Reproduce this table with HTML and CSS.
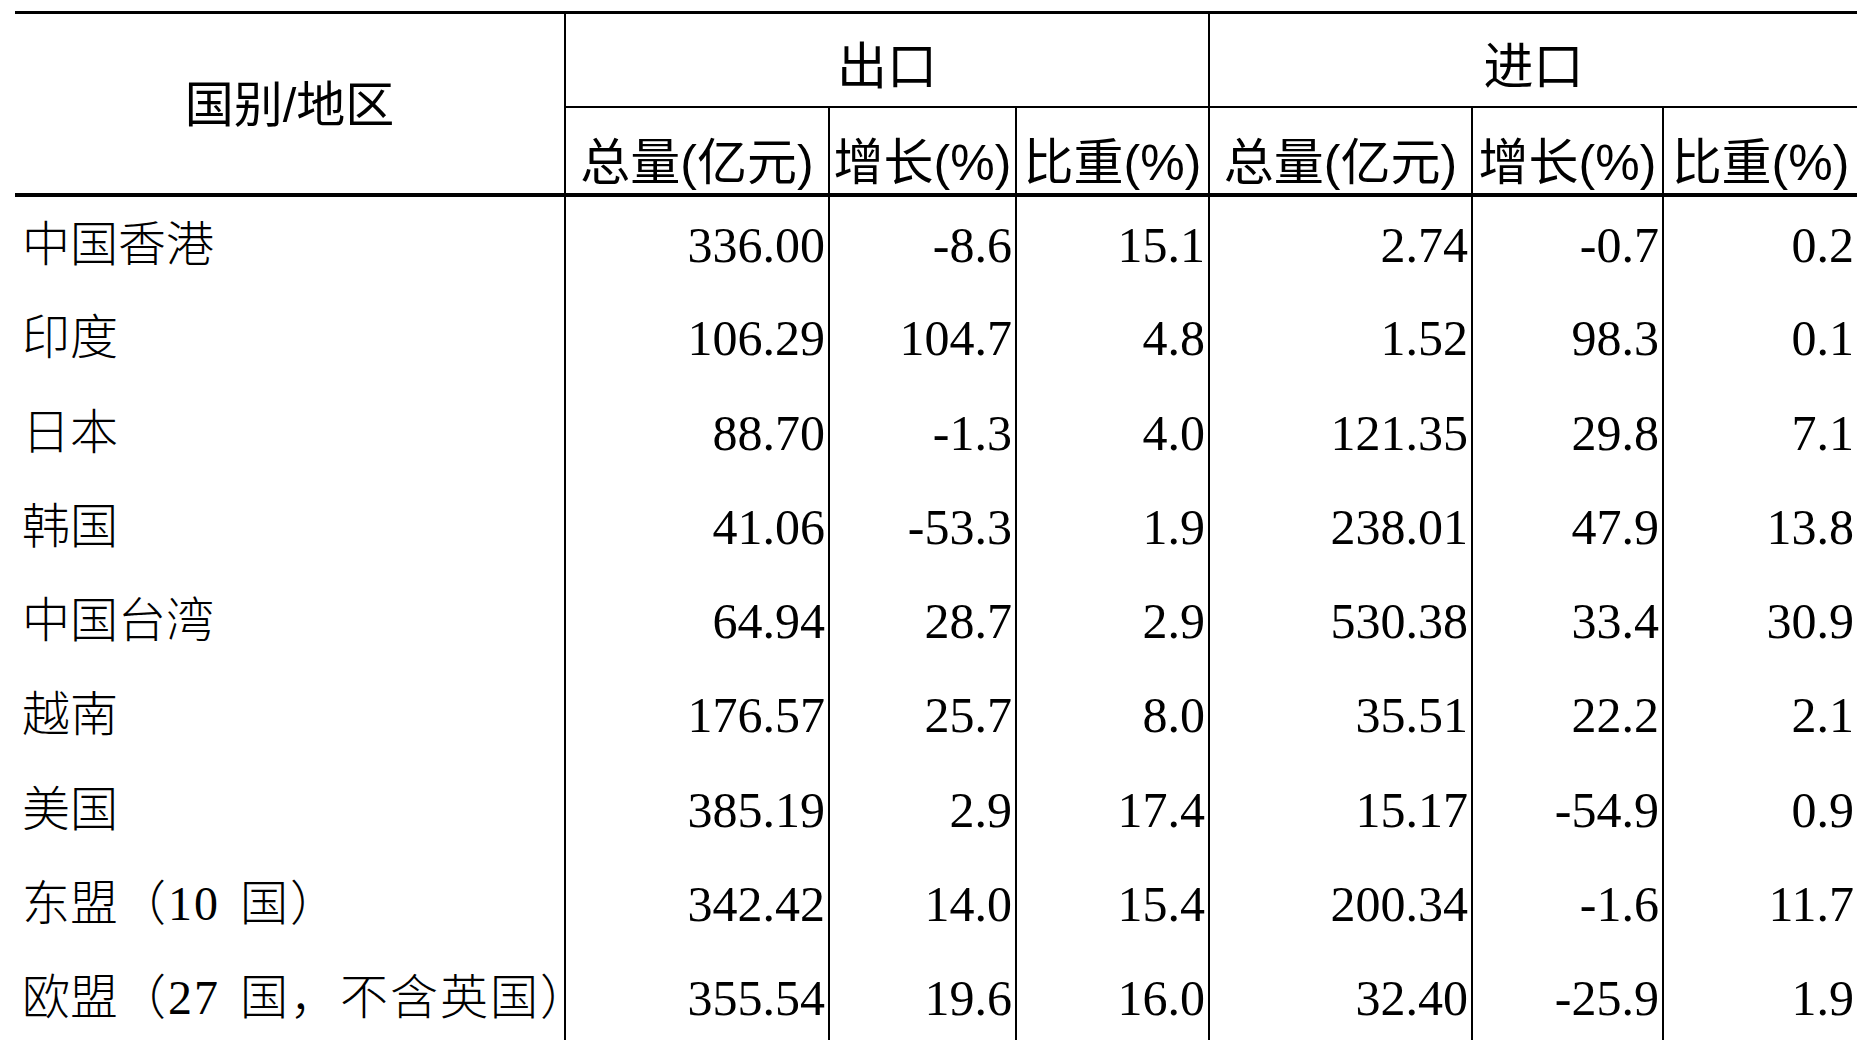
FILE: index.html
```html
<!DOCTYPE html>
<html lang="zh-CN">
<head>
<meta charset="utf-8">
<title>国别/地区 进出口</title>
<link rel="stylesheet" href="styles.css">
</head>
<body>
<div class="wrap">
<table class="trade">
  <colgroup>
    <col class="c-name">
    <col class="c-total">
    <col class="c-grow">
    <col class="c-share">
    <col class="c-total2">
    <col class="c-grow2">
    <col class="c-share2">
  </colgroup>
  <thead>
    <tr class="h1">
      <th rowspan="2" class="region">国别/地区</th>
      <th colspan="3" class="group sep">出口</th>
      <th colspan="3" class="group">进口</th>
    </tr>
    <tr class="h2">
      <th class="sub">总量(亿元)</th>
      <th class="sub">增长(%)</th>
      <th class="sub">比重(%)</th>
      <th class="sub">总量(亿元)</th>
      <th class="sub">增长(%)</th>
      <th class="sub last">比重(%)</th>
    </tr>
  </thead>
  <tbody>
    <tr><td class="name">中国香港</td><td>336.00</td><td>-8.6</td><td>15.1</td><td>2.74</td><td>-0.7</td><td class="last">0.2</td></tr>
    <tr><td class="name">印度</td><td>106.29</td><td>104.7</td><td>4.8</td><td>1.52</td><td>98.3</td><td class="last">0.1</td></tr>
    <tr><td class="name">日本</td><td>88.70</td><td>-1.3</td><td>4.0</td><td>121.35</td><td>29.8</td><td class="last">7.1</td></tr>
    <tr><td class="name">韩国</td><td>41.06</td><td>-53.3</td><td>1.9</td><td>238.01</td><td>47.9</td><td class="last">13.8</td></tr>
    <tr><td class="name">中国台湾</td><td>64.94</td><td>28.7</td><td>2.9</td><td>530.38</td><td>33.4</td><td class="last">30.9</td></tr>
    <tr><td class="name">越南</td><td>176.57</td><td>25.7</td><td>8.0</td><td>35.51</td><td>22.2</td><td class="last">2.1</td></tr>
    <tr><td class="name">美国</td><td>385.19</td><td>2.9</td><td>17.4</td><td>15.17</td><td>-54.9</td><td class="last">0.9</td></tr>
    <tr><td class="name">东盟<span class="note">（10 国）</span></td><td>342.42</td><td>14.0</td><td>15.4</td><td>200.34</td><td>-1.6</td><td class="last">11.7</td></tr>
    <tr><td class="name">欧盟<span class="note">（27 国，不含英国）</span></td><td>355.54</td><td>19.6</td><td>16.0</td><td>32.40</td><td>-25.9</td><td class="last">1.9</td></tr>
  </tbody>
</table>
</div>
</body>
</html>
```
FILE: styles.css
```css
html, body {
  margin: 0;
  padding: 0;
  background: #ffffff;
  color: #000000;
}

.wrap {
  padding: 11px 0 0 15px;
}

.trade {
  border-collapse: collapse;
  table-layout: fixed;
  width: 1842px;
  border-top: 3px solid #000;
}

.c-name { width: 550px; }
.c-total { width: 264px; }
.c-grow { width: 187px; }
.c-share { width: 193px; }
.c-total2 { width: 263px; }
.c-grow2 { width: 191px; }
.c-share2 { width: 194px; }

.trade th {
  font-family: "Liberation Sans", "Noto Sans CJK SC", sans-serif;
  font-weight: 400;
  font-size: 50px;
  line-height: 1;
  padding: 0;
  text-align: center;
  white-space: nowrap;
}

.trade .region {
  font-size: 49px;
  border-right: 2px solid #000;
  border-bottom: 4px solid #000;
  vertical-align: middle;
  padding-top: 4px;
}

.trade .h1 th.group {
  height: 94px;
  border-bottom: 2px solid #000;
  vertical-align: middle;
  padding-top: 14px;
  box-sizing: border-box;
}

.trade .h1 th.sep {
  border-right: 2px solid #000;
}

.trade .h2 th {
  height: 88px;
  border-right: 2px solid #000;
  border-bottom: 4px solid #000;
  vertical-align: middle;
  padding-top: 26px;
  box-sizing: border-box;
}

.trade .h2 th.last,
.trade td.last {
  border-right: none;
}

.trade td {
  height: 94.25px;
  padding: 5px 3px 0 0;
  border-right: 2px solid #000;
  font-family: "Liberation Serif", "Times New Roman", serif;
  font-size: 50px;
  line-height: 1;
  text-align: right;
  vertical-align: middle;
  white-space: nowrap;
  box-sizing: border-box;
}

.trade td.name {
  text-align: left;
  padding: 5px 0 0 7px;
  font-family: "Liberation Serif", "Noto Sans CJK SC", serif;
  font-weight: 300;
  font-size: 48px;
}

.trade td.name .note {
  letter-spacing: 2px;
  word-spacing: 6px;
}
```
